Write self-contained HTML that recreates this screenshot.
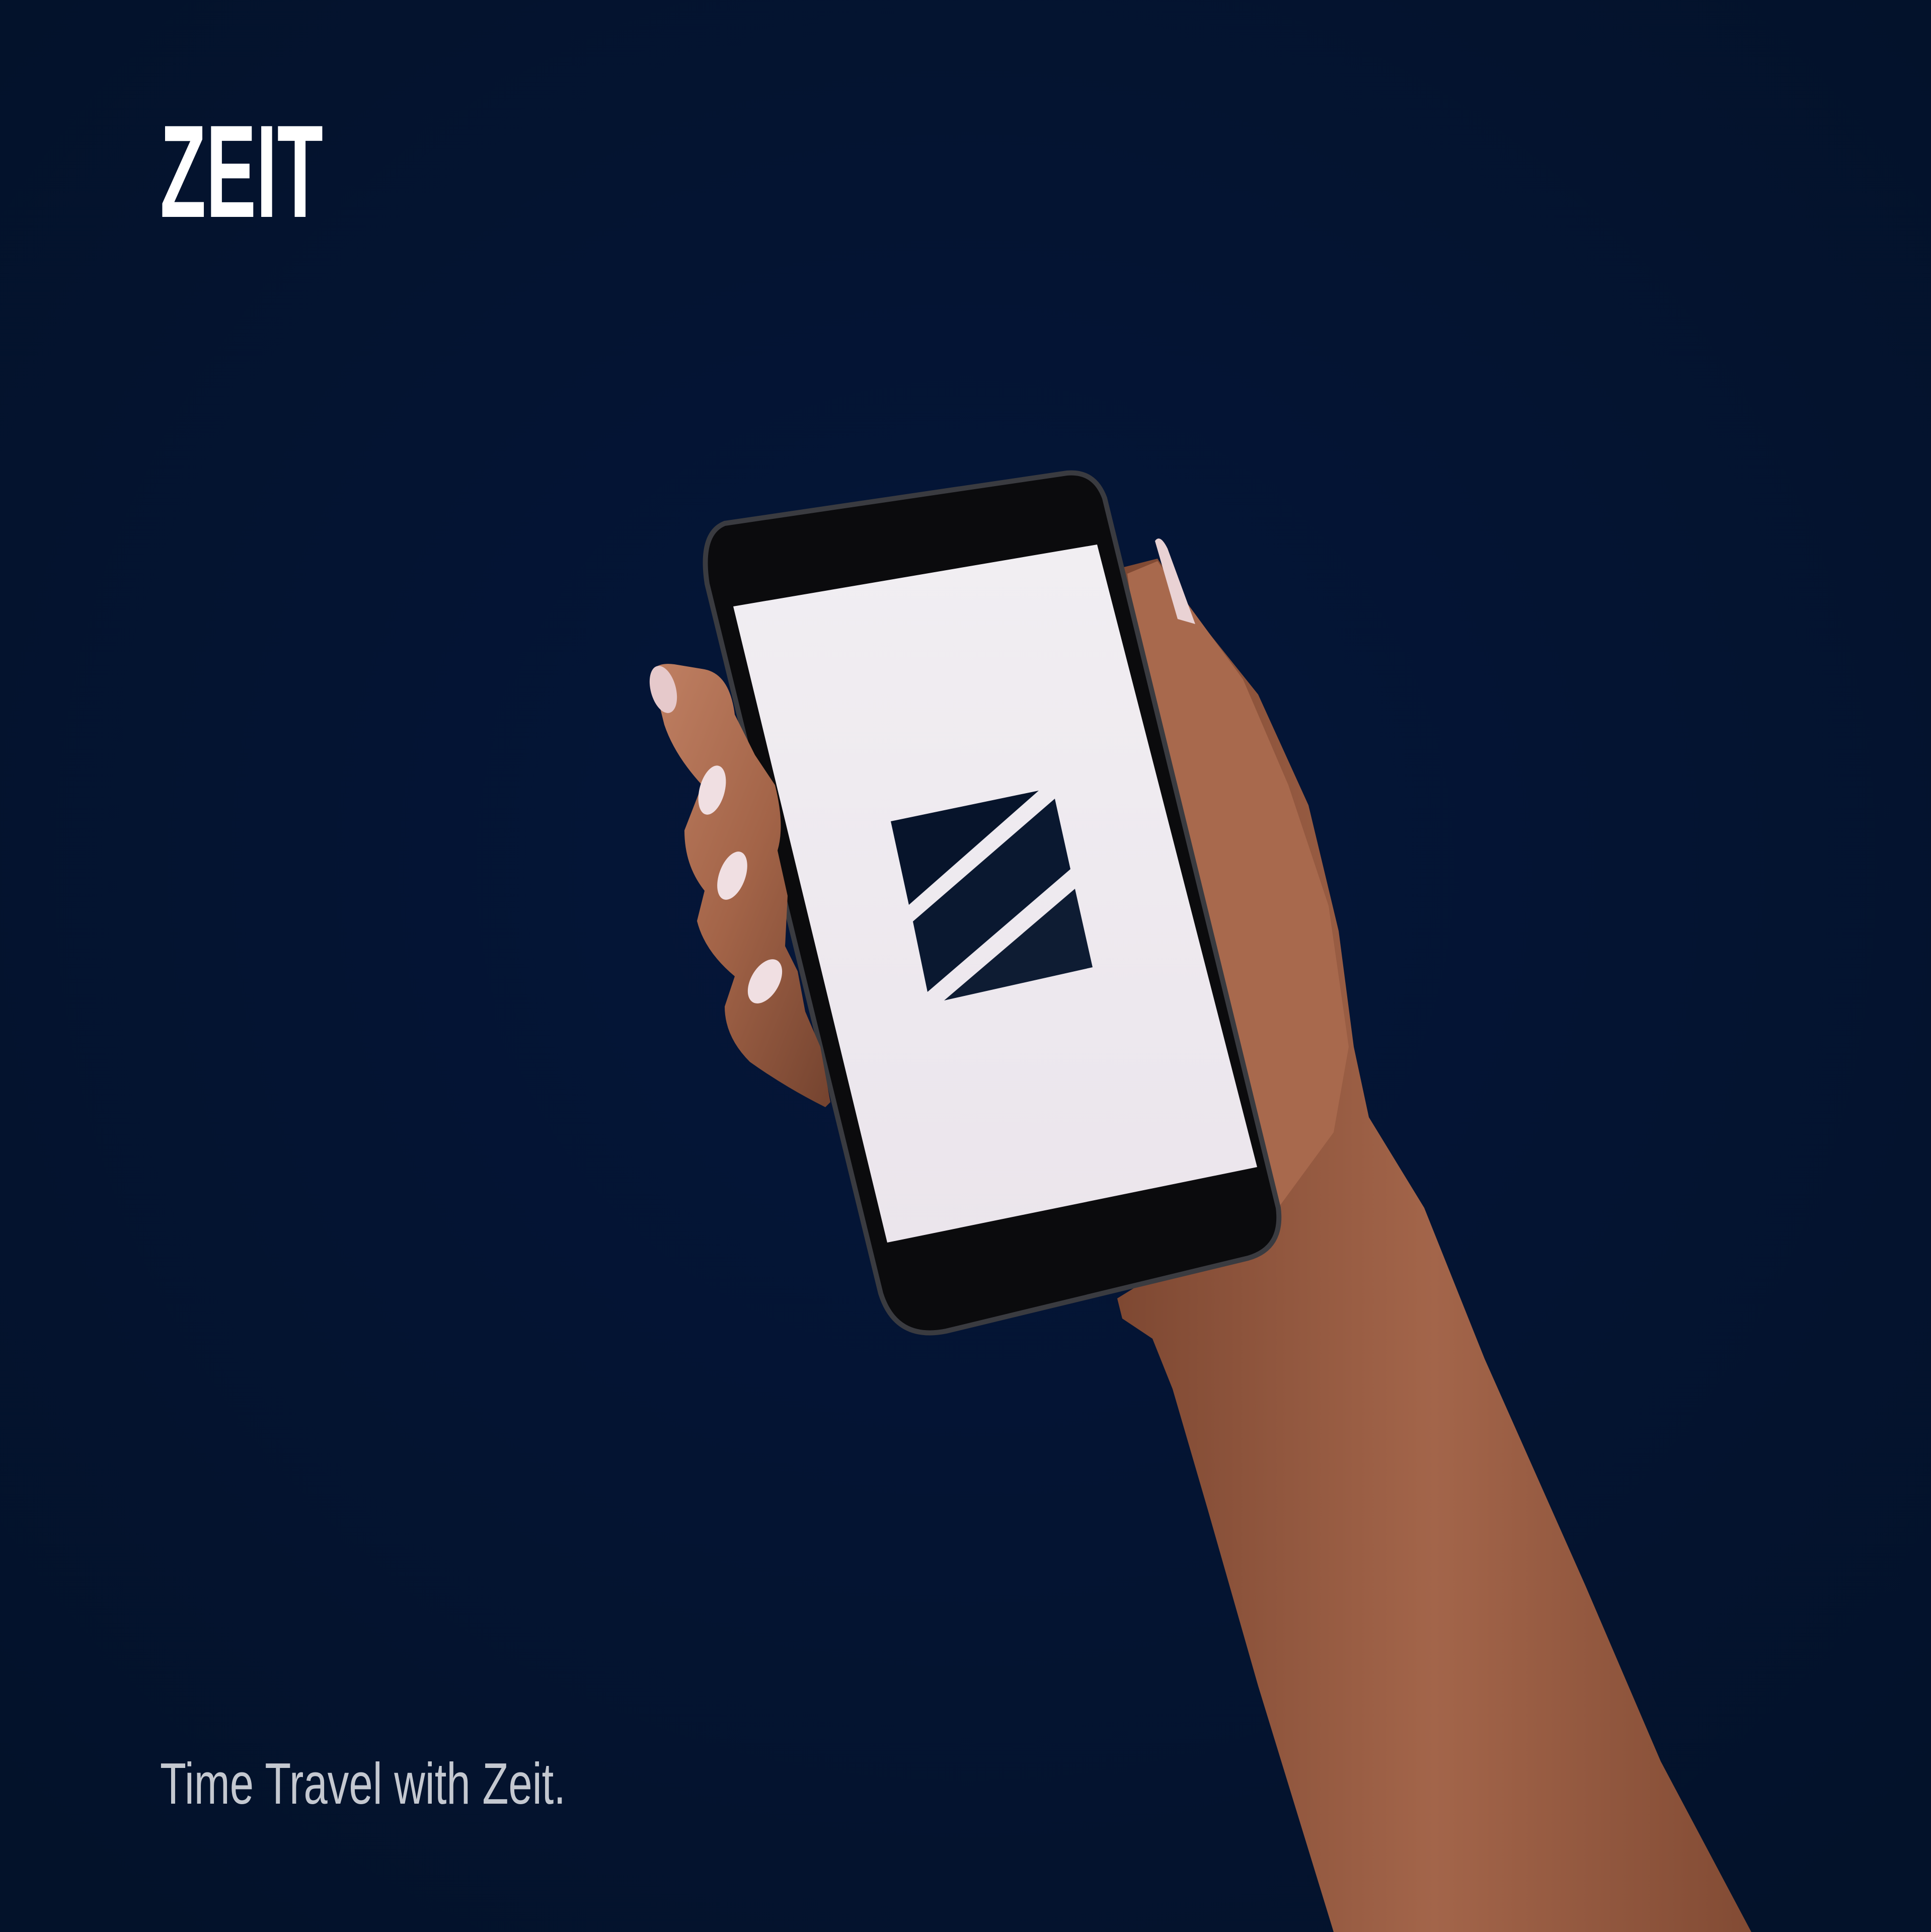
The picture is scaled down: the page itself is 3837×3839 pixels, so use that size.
<!DOCTYPE html>
<html><head><meta charset="utf-8"><style>
html,body{margin:0;padding:0;background:#04142b;}
svg{display:block}
</style></head><body>
<svg width="3837" height="3839" viewBox="0 0 3837 3839" xmlns="http://www.w3.org/2000/svg">
<defs>
<radialGradient id="bg" cx="0.5" cy="0.45" r="0.7">
<stop offset="0" stop-color="#05163a"/><stop offset="1" stop-color="#03122a"/>
</radialGradient>
<linearGradient id="skin" x1="0" y1="0" x2="1" y2="1">
<stop offset="0" stop-color="#c08063"/><stop offset="0.5" stop-color="#a36448"/><stop offset="1" stop-color="#74432f"/>
</linearGradient>
<linearGradient id="arm" x1="0" y1="0" x2="1" y2="0">
<stop offset="0" stop-color="#7e4832"/><stop offset="0.5" stop-color="#a3654a"/><stop offset="1" stop-color="#824b34"/>
</linearGradient>
<linearGradient id="scr" x1="0" y1="0" x2="0" y2="1">
<stop offset="0" stop-color="#f1eef2"/><stop offset="1" stop-color="#ebe5ec"/>
</linearGradient>
</defs>
<rect width="3837" height="3839" fill="url(#bg)"/>

<text x="318" y="431" font-family="Liberation Sans, sans-serif" font-size="262" font-weight="bold" fill="#ffffff" textLength="324" lengthAdjust="spacingAndGlyphs">ZEIT</text>
<text x="318" y="3584" font-family="Liberation Sans, sans-serif" font-size="116" fill="#c4c8d0" textLength="806" lengthAdjust="spacingAndGlyphs">Time Travel with Zeit.</text>

<!-- arm & palm -->
<path d="M2233,1127 L2300,1110 L2380,1230 L2500,1380 L2600,1600 L2660,1850 L2690,2080 L2720,2220 L2830,2400 L2950,2700 L3150,3150 L3300,3500 L3480,3839 L2650,3839 L2500,3350 L2400,3000 L2330,2760 L2290,2660 L2230,2620 L2220,2580 L2350,2500 Z" fill="url(#arm)"/>
<path d="M2240,1140 L2300,1115 L2360,1200 L2470,1350 L2560,1560 L2640,1800 L2680,2080 L2650,2250 L2540,2400 L2400,2300 Z" fill="#a8694d"/>
<path d="M2295,1075 Q2305,1060 2320,1090 L2375,1240 L2340,1230 Z" fill="#e9d2d4"/>

<!-- phone body -->
<path d="M1440,1040 L2120,940 Q2175,935 2195,990 L2540,2400 Q2550,2480 2480,2500 L1880,2645 Q1780,2665 1750,2570 L1405,1160 Q1390,1060 1440,1040 Z" fill="#0b0b0d" stroke="#3a3b40" stroke-width="10"/>
<path d="M1457,1205 L2180,1082 L2498,2319 L1763,2469 Z" fill="url(#scr)"/>
<path d="M1770,1632 L2064,1571 L1806,1798 Z" fill="#07142b"/>
<path d="M2096,1587 L2127,1727 L1843,1971 L1814,1831 Z" fill="#0a1830"/>
<path d="M2136,1766 L2171,1922 L1876,1988 Z" fill="#0e1c33"/>

<!-- left fingers -->
<path d="M1295,1340 Q1300,1315 1340,1320 L1400,1330 Q1450,1340 1460,1420 L1500,1500 L1540,1560 Q1560,1640 1545,1690 L1565,1780 L1560,1880 L1585,1930 L1600,2010 L1630,2080 L1650,2190 L1640,2200 Q1560,2160 1490,2110 Q1440,2060 1440,2000 L1460,1940 Q1400,1890 1385,1830 L1400,1770 Q1360,1720 1360,1650 L1395,1560 Q1340,1500 1320,1440 Z" fill="url(#skin)"/>
<ellipse cx="1318" cy="1370" rx="25" ry="48" fill="#e6c9cb" transform="rotate(-15 1318 1370)"/>
<ellipse cx="1415" cy="1570" rx="25" ry="50" fill="#f0dfe2" transform="rotate(15 1415 1570)"/>
<ellipse cx="1455" cy="1740" rx="26" ry="50" fill="#f0dfe2" transform="rotate(20 1455 1740)"/>
<ellipse cx="1520" cy="1950" rx="28" ry="48" fill="#f0dfe2" transform="rotate(30 1520 1950)"/>
</svg>
</body></html>
